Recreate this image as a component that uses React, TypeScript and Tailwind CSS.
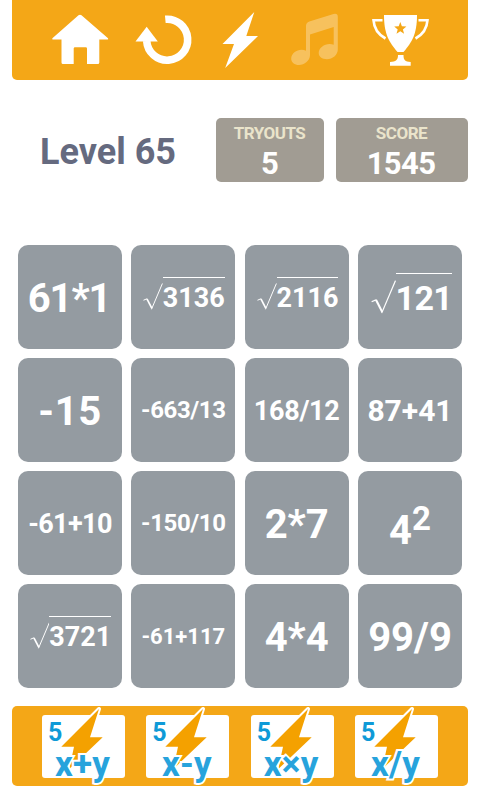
import { ReactNode } from 'react'

const BOLT = 'M58 7 20.300 44.700H33L28.300 67 61.700 35.300H49z'

function Root({ children }: { children: ReactNode }) {
  return (
    <span className="flex">
      <svg className="mt-[0.22em] h-[1em] w-[0.73em]" viewBox="0 0 20 27" fill="none" stroke="#fff">
        <path d="M.5 17.300 4 15.800" strokeWidth="1" />
        <path d="M4 15.800 9 25.500" strokeWidth="1.700" />
        <path d="M8.600 26.500 19.700.3" strokeWidth="1" />
      </svg>
      <span className="border-t border-white">{children}</span>
    </span>
  )
}

const tiles: { style: string; label: ReactNode }[] = [
  { style: 'text-[40px] pt-[3px] pr-0.5 tracking-[-1.1px]', label: '61*1' },
  { style: 'text-[27px] pt-0.5 pl-px', label: <Root>3136</Root> },
  { style: 'text-[27px] pt-0.5 pl-0.5', label: <Root>2116</Root> },
  { style: 'text-[34px] leading-[48px] pl-[3px] tracking-[-0.6px]', label: <Root>121</Root> },
  { style: 'text-[40px] pt-[3px] tracking-[0.6px]', label: '-15' },
  { style: 'text-[24px] tracking-[-0.4px]', label: '-663/13' },
  { style: 'text-[27px] pt-0.5 tracking-[-0.3px]', label: '168/12' },
  { style: 'text-[30px]', label: '87+41' },
  { style: 'text-[27px] pt-0.5 tracking-[-0.6px]', label: '-61+10' },
  { style: 'text-[24px] tracking-[-0.4px]', label: '-150/10' },
  { style: 'text-[40px] pt-[3px]', label: '2*7' },
  {
    style: 'text-[40px] pt-[15px]',
    label: (
      <span>
        4<sup className="top-[-0.4em] text-[33px]">2</sup>
      </span>
    ),
  },
  { style: 'text-[27px] pt-0.5 pl-px', label: <Root>3721</Root> },
  { style: 'text-[22px]', label: '-61+117' },
  { style: 'text-[40px] pt-[3px]', label: '4*4' },
  { style: 'text-[40px] pt-[3px]', label: '99/9' },
]

const boosts = ['x+y', 'x-y', 'x×y', 'x/y']

export default function App() {
  return (
    <div className="flex h-[800px] w-[480px] flex-col bg-white px-3 font-['Roboto',sans-serif] font-bold">
      <header className="h-20 rounded-b-[5px] bg-[#f4a717]">
        <svg width="456" height="80" viewBox="12 0 456 80" fill="#fff">
          <path d="M78.5 15.3q1.5-1.2 3 0L108 38.2q.8 1.2-.6 1.2H99.3V62.5q0 1.5-1.5 1.5H87V48.5q0-1.3-1.3-1.3H75q-1.3 0-1.3 1.3V64H63q-1.5 0-1.5-1.5V39.4H53q-1.3 0-.6-1.2z" />
          <path d="M165.3 19.3A20.5 20.5 0 1 1 146.7 41" fill="none" stroke="#fff" strokeWidth="7.6" />
          <path d="M146.7 26.7 157.8 41.6H135.5z" />
          <path d="M254.3 12 222.500 44H234l-8.800 24L258 36H246.300z" />
          <path
            opacity="0.3"
            d="M306 26q0-3.500 3.300-4.500L333.500 14q4.300-1 4.300 3V49.500C337.800 55 332.500 59.200 327 59.200C322 59.200 318.700 56.600 318.700 53C318.700 48 324 44 329.500 44Q332 44 333.700 44.800V27L310 34.400V55C310 60.500 304.500 65 299 65C294.500 65 291.200 62.300 291.200 58.700C291.200 53.500 296.500 49.700 301.500 49.700Q304 49.700 306 50.700z"
          />
          <path d="M384 15H417C417 34 412 42 403.500 52H397.500C389 42 384 34 384 15z" />
          <path d="M398 55H403.500C403.500 60 405 61.700 410.700 62V65.700H390V62C396 61.700 398 60 398 55z" />
          <path
            d="M382.500 20.200H373.500C374 28 378 34.500 385.500 38.500M418.500 20.200H427.500C427 28 423 34.500 415.500 38.500"
            fill="none"
            stroke="#fff"
            strokeWidth="2.600"
          />
          <path
            d="M400.300 22l1.600 4.300 4.500.2-3.500 2.900 1.200 4.400-3.800-2.500-3.800 2.500 1.200-4.400-3.500-2.900 4.500-.2z"
            fill="#f4a717"
          />
        </svg>
      </header>

      <section className="mt-[38px] flex h-16 items-center gap-3 text-center">
        <h1 className="w-48 pt-[3px] text-[36px] text-[#656a7f]">Level 65</h1>
        <div className="h-16 w-[108px] rounded-[5px] bg-[#a19c93] pt-[5px]">
          <div className="pr-px text-[17px] leading-5 tracking-[-0.5px] text-[#eae4cb]">TRYOUTS</div>
          <div className="text-[31px] leading-[42px] text-white">5</div>
        </div>
        <div className="h-16 w-[132px] rounded-[5px] bg-[#a19c93] pt-[5px]">
          <div className="pr-px text-[17px] leading-5 tracking-[-0.5px] text-[#eae4cb]">SCORE</div>
          <div className="pr-0.5 text-[31px] leading-[42px] tracking-[-0.6px] text-white">1545</div>
        </div>
      </section>

      <main className="mx-1.5 mt-[63px] grid grid-cols-4 gap-x-[9.33px] gap-y-[9px]">
        {tiles.map(({ style, label }, i) => (
          <div
            key={i}
            className={`flex h-[104px] items-center justify-center rounded-[10px] bg-[#949ba1] text-white ${style}`}
          >
            {label}
          </div>
        ))}
      </main>

      <footer className="mt-[18px] flex h-20 gap-[21.33px] rounded-[5px] bg-[#f4a717] pl-[30px] text-[#0f9ad7]">
        {boosts.map((label) => (
          <div key={label} className="relative mt-[9px] h-[63px] w-[83px] rounded-[3px] bg-white">
            <span className="absolute top-[3px] left-1.5 text-[25px] leading-[30px]">5</span>
            <svg className="absolute -top-2 left-0" width="83" height="79" viewBox="1 5 83 79">
              <path d={BOLT} fill="#f4a100" stroke="#fff" strokeWidth="4" strokeLinejoin="round" paintOrder="stroke" />
            </svg>
            <span className="absolute top-8 -left-px w-full text-center text-[35px] leading-9 tracking-[0.2px] text-[#27a3dc] [paint-order:stroke_fill] [-webkit-text-stroke:4px_white]">
              {label}
            </span>
          </div>
        ))}
      </footer>
    </div>
  )
}
